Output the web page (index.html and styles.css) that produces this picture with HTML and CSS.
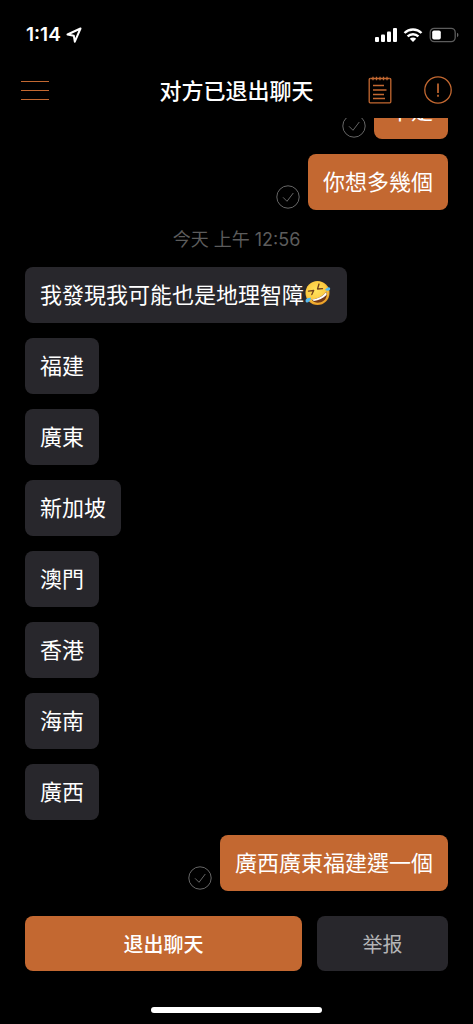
FILE: index.html
```html
<!DOCTYPE html>
<html lang="zh-Hant">
<head>
<meta charset="utf-8">
<meta name="viewport" content="width=device-width, initial-scale=1">
<title>对方已退出聊天</title>
<link rel="stylesheet" href="styles.css">
</head>
<body>
<svg class="defs" aria-hidden="true">
  <symbol id="tick" viewBox="0 0 24 24">
    <circle cx="12" cy="12" r="11.2"/>
    <path d="M7 12.3l4 4L17.3 8"/>
  </symbol>
</svg>
<div class="app">
  <div class="status">
    <span class="clock">1:14</span>
    <svg class="locate" viewBox="0 0 16 16" aria-hidden="true"><path d="M14.5 1.500L1.500 7.500l6.300 1.200 1 6z"/></svg>
    <svg class="signals" viewBox="0 0 84 16" aria-hidden="true">
      <g fill="#fff">
        <rect x="0" y="10" width="4" height="5" rx="1"/>
        <rect x="6" y="7.6" width="4" height="7.4" rx="1"/>
        <rect x="12" y="4.4" width="4" height="10.6" rx="1"/>
        <rect x="18" y="1" width="4" height="14" rx="1"/>
        <path d="M38 15l-3.2-3.3a4.6 4.6 0 0 1 6.4 0z"/>
      </g>
      <g fill="none" stroke="#fff" stroke-width="2.4">
        <path d="M29.5 6a12.2 12.2 0 0 1 17 0"/>
        <path d="M32.6 9.4a7.7 7.7 0 0 1 10.8 0"/>
      </g>
      <rect x="55.2" y="1.4" width="25" height="13.2" rx="4" fill="none" stroke="#5c5c5c" stroke-width="1.3"/>
      <rect x="57.2" y="3.4" width="8.6" height="9.2" rx="1.8" fill="#fff"/>
      <path d="M82 5.8v4.4a2.4 2.4 0 0 0 0-4.4z" fill="#666"/>
    </svg>
  </div>
  <header class="bar">
    <button class="icon-button" aria-label="菜单">
      <svg class="menu" viewBox="0 0 28 28"><path d="M0 5.500h28M0 14.500h28M0 23.500h28"/></svg>
    </button>
    <h1 class="title" lang="zh-Hans">对方已退出聊天</h1>
    <div class="actions">
      <button class="icon-button" aria-label="记录">
        <svg class="note" viewBox="0 0 24 28">
          <path d="M2.8 2.5h-.6a1 1 0 0 0-1 1v22.300a1 1 0 0 0 1 1h19.600a1 1 0 0 0 1-1v-22.300a1 1 0 0 0-1-1h-.6"/>
          <path d="M3 2.500h18M5 .8v3.400M8.500 .8v3.400M12 .8v3.400M15.500 .8v3.400M19 .8v3.400"/>
          <path d="M5 9.500h11M5 14h13.500M5 18.500h11M5 22.500h12"/>
        </svg>
      </button>
      <button class="icon-button" aria-label="提示">
        <svg class="alert" viewBox="0 0 28 28"><circle cx="14" cy="14" r="13.200"/><path d="M14 7.500v9.500M14 18.800v2" stroke-width="1.700"/></svg>
      </button>
    </div>
  </header>
  <main class="chat">
    <div class="row sent"><svg class="tick" aria-label="已送达"><use href="#tick"/></svg><p class="bubble">不是</p></div>
    <div class="row sent"><svg class="tick" aria-label="已送达"><use href="#tick"/></svg><p class="bubble">你想多幾個</p></div>
    <time class="stamp">今天 上午 12:56</time>
    <div class="row"><p class="bubble">我發現我可能也是地理智障<svg class="emoji" viewBox="0 0 28 28" role="img" aria-label="🤣">
      <defs><radialGradient id="face" cx=".45" cy=".4" r=".6"><stop offset="0" stop-color="#ffe45f"/><stop offset=".7" stop-color="#fcc93f"/><stop offset="1" stop-color="#e99b25"/></radialGradient></defs>
      <circle cx="13.500" cy="14" r="12" fill="url(#face)"/>
      <path d="M7.500 20.500C13 20.200 19 17.200 22.300 12.500c1.700 4.500-.8 9.300-5.300 10.700-3.800 1.200-7.600.2-9.500-2.700z" fill="#743a18"/>
      <path d="M8 20.300c5.400-.4 10.800-3.100 14.200-7.400.4 1.300.4 2.200.2 3.100-3.300 3.200-7.800 5.300-12.500 6-.8-.4-1.400-1-1.900-1.700z" fill="#fff"/>
      <path d="M4.500 12.200l5.200-.7-1.900 4.100M15 5l-1.500 5 5-.3" fill="none" stroke="#70401b" stroke-width="1.300" stroke-linecap="round" stroke-linejoin="round"/>
      <path d="M7.200 18.700c-3.300-.2-5.800 1-5.700 3.200.1 2.300 4.300 2.400 5.700-3.200zM21 11c2-2.800 4.200-3.500 5-2 1 2-1.600 3.700-5 2z" fill="#55b9ee"/>
    </svg></p></div>
    <div class="row"><p class="bubble">福建</p></div>
    <div class="row"><p class="bubble">廣東</p></div>
    <div class="row"><p class="bubble">新加坡</p></div>
    <div class="row"><p class="bubble">澳門</p></div>
    <div class="row"><p class="bubble">香港</p></div>
    <div class="row"><p class="bubble">海南</p></div>
    <div class="row"><p class="bubble">廣西</p></div>
    <div class="row sent"><svg class="tick" aria-label="已送达"><use href="#tick"/></svg><p class="bubble">廣西廣東福建選一個</p></div>
  </main>
  <footer class="footer" lang="zh-Hans">
    <button class="button leave">退出聊天</button>
    <button class="button report">举报</button>
  </footer>
  <div class="home"></div>
</div>
</body>
</html>
```
FILE: styles.css
```css
* { box-sizing: border-box; }

body {
  margin: 0;
  background: #000;
  color: #fff;
  font-family: "Noto Sans CJK TC", sans-serif;
}

button {
  margin: 0;
  padding: 0;
  border: 0;
  background: none;
  color: inherit;
  cursor: pointer;
}

svg { display: block; }

.defs {
  position: absolute;
  width: 0;
  height: 0;
}

.app {
  display: flex;
  flex-direction: column;
  height: 100vh;
}

.status {
  display: flex;
  flex: none;
  align-items: center;
  height: 62px;
  padding: 8px 14px 0 26px;
}

.clock {
  font: 600 19px/24px Inter, sans-serif;
}

.locate {
  width: 16px;
  height: 16px;
  margin-left: 5px;
  fill: none;
  stroke: #fff;
  stroke-width: 2;
  stroke-linejoin: round;
}

.signals {
  width: 84px;
  height: 16px;
  margin-left: auto;
}

.bar {
  display: grid;
  grid-template-columns: 1fr auto 1fr;
  flex: none;
  align-items: center;
  height: 56px;
  padding: 0 21px;
}

.icon-button { justify-self: start; }

.icon-button svg {
  fill: none;
  stroke: #c36831;
  stroke-width: 1.3;
}

.menu, .alert {
  width: 28px;
  height: 28px;
}

.icon-button .menu { stroke-width: 1; }

.note {
  width: 24px;
  height: 28px;
}

.title {
  margin: 0;
  padding-bottom: 2px;
  font: 500 22px/32px "Noto Sans CJK SC", sans-serif;
}

.actions {
  display: flex;
  justify-content: flex-end;
  gap: 32px;
}

.chat {
  display: flex;
  flex: 1;
  flex-direction: column;
  justify-content: flex-end;
  gap: 15px;
  min-height: 0;
  padding: 0 25px 10px;
  overflow: hidden;
}

.row {
  display: flex;
  flex: none;
  align-items: flex-end;
  gap: 8px;
}

.sent { justify-content: flex-end; }

.bubble {
  display: flex;
  align-items: center;
  margin: 0;
  padding: 10px 15px 14px;
  border-radius: 8px;
  background: #28272c;
  font-size: 22px;
  font-weight: 400;
  line-height: 32px;
}

.sent .bubble { background: #c36831; }

.tick {
  flex: none;
  width: 24px;
  height: 24px;
  margin-bottom: 1px;
  fill: none;
  stroke: #666;
  stroke-width: 1;
}

.emoji {
  width: 28px;
  height: 28px;
}

.stamp {
  flex: none;
  padding-top: 3px;
  color: #5c5c5c;
  font-family: Inter, "Noto Sans CJK TC", sans-serif;
  font-size: 18px;
  font-weight: 400;
  line-height: 24px;
  text-align: center;
}

.footer {
  display: grid;
  grid-template-columns: 277fr 131fr;
  flex: none;
  gap: 15px;
  padding: 15px 25px 0;
}

.button {
  height: 55px;
  border-radius: 8px;
  font: 500 20px/28px "Noto Sans CJK SC", sans-serif;
}

.leave { background: #c36831; }

.report {
  background: #28272c;
  color: #b4b4b6;
  font-weight: 400;
}

.home {
  flex: none;
  align-self: center;
  width: 36%;
  height: 6px;
  margin: 36px 0 11px;
  border-radius: 3px;
  background: #fff;
}
```
